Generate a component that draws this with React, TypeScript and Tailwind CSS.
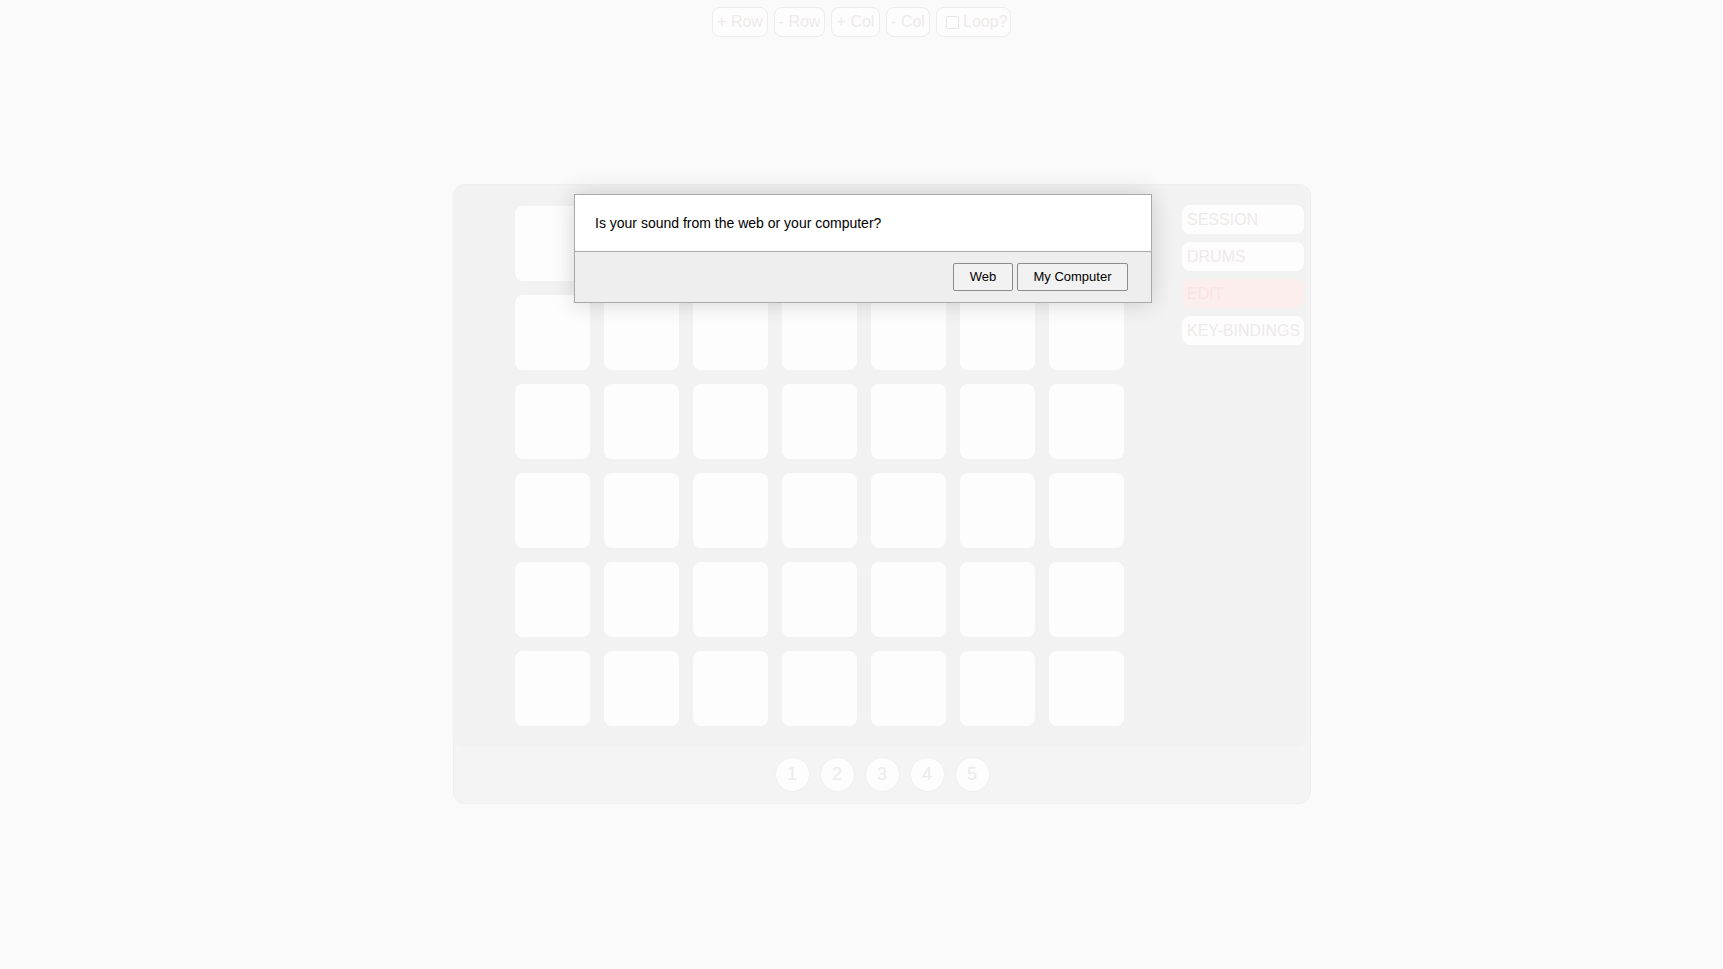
import React from 'react';

const font = { fontFamily: '"Liberation Sans", Arial, sans-serif' };

const toolbar = [
  { label: '+ Row', w: 'w-[56px]' },
  { label: '- Row', w: 'w-[51px]' },
  { label: '+ Col', w: 'w-[49px]' },
  { label: '- Col', w: 'w-[44px]' },
];
const tabs = ['SESSION', 'DRUMS', 'EDIT', 'KEY-BINDINGS'];
const pages = [1, 2, 3, 4, 5];
const rows = 6;
const cols = 7;

const App: React.FC = () => {
  return (
    <div className="min-h-[969px] w-full bg-[#fafafa] relative" style={font}>
      {/* toolbar */}
      <div className="flex justify-center gap-[6px] pt-[7px]">
        {toolbar.map((b) => (
          <button
            key={b.label}
            className={`h-[30px] ${b.w} rounded-[8px] border border-[#ececec] bg-[#fdfdfd] text-[16px] text-[#eeeaea] leading-none text-center`}
          >
            {b.label}
          </button>
        ))}
        <button className="h-[30px] w-[75px] pl-[9px] rounded-[8px] border border-[#ececec] bg-[#fdfdfd] text-[16px] text-[#eeeaea] leading-none flex items-center gap-[4px]">
          <span className="inline-block w-[13px] h-[13px] border border-[#e6e6e6] bg-white rounded-[2px]" />
          Loop?
        </button>
      </div>

      {/* main panel */}
      <div className="ml-[453px] mt-[147px] w-[858px] rounded-[12px] border border-[#efefef] bg-[#f4f4f4]">
        <div className="mr-[4px] h-[562px] rounded-[10px] bg-[#f2f2f2] flex pl-[61px] pt-[21px]">
          <div className="grid grid-cols-[repeat(7,75px)] auto-rows-[75px] gap-[14px]">
            {Array.from({ length: rows * cols }).map((_, i) => (
              <div key={i} className="rounded-[8px] bg-[#fdfdfd]" />
            ))}
          </div>
          <div className="ml-[58px] flex flex-col gap-[8px] -mt-[1px]">
            {tabs.map((tab) => (
              <button
                key={tab}
                className={`w-[122px] h-[29px] rounded-[8px] text-left pl-[5px] text-[16px] leading-none ${
                  tab === 'EDIT' ? 'bg-[#fdeeee] text-[#fae3e3]' : 'bg-[#fdfdfd] text-[#eeeaea]'
                }`}
              >
                {tab}
              </button>
            ))}
          </div>
        </div>
        <div className="h-[56px] flex justify-center items-start gap-[10px] pt-[10px]">
          {pages.map((p) => (
            <div
              key={p}
              className="w-[35px] h-[35px] rounded-full bg-[#fdfdfd] border border-[#f0f0f0] flex items-center justify-center text-[18px] text-[#ebebeb]"
            >
              {p}
            </div>
          ))}
        </div>
      </div>

      {/* dialog */}
      <div className="absolute left-[574px] top-[194px] w-[578px] border border-[#a9a9a9] bg-white shadow-[0_0_22px_rgba(0,0,0,0.16)]">
        <div className="h-[57px] flex items-center pl-[20px] text-[14px] text-black border-b border-[#a9a9a9]">
          Is your sound from the web or your computer?
        </div>
        <div className="h-[50px] bg-[#eeeeee] flex items-center justify-end gap-[4px] pr-[23px]">
          <button className="h-[28px] w-[60px] border border-[#8c8c8c] rounded-[2px] bg-[#f2f2f2] text-[13px] text-black">
            Web
          </button>
          <button className="h-[28px] w-[111px] border border-[#8c8c8c] rounded-[2px] bg-[#f2f2f2] text-[13px] text-black">
            My Computer
          </button>
        </div>
      </div>
    </div>
  );
};

export default App;
